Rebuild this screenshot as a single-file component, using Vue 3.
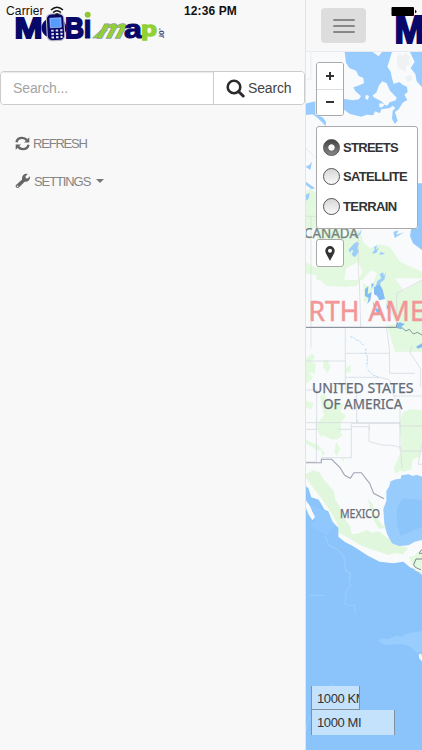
<script setup>
import { ref } from 'vue'

const query = ref('')
const layer = ref('STREETS')
const layers = ['STREETS', 'SATELLITE', 'TERRAIN']
const bars = [0, 1, 2]
</script>

<template>
  <div class="screen">
    <aside class="drawer">
      <a class="brand">
        <svg width="180" height="50" viewBox="0 0 180 50">
          <g class="heavy" fill="#08086a" stroke="#08086a">
            <ellipse cx="54" cy="28" rx="12.500" ry="10.500" stroke="none" />
            <text x="14.500" y="38" font-size="30" textLength="28" lengthAdjust="spacingAndGlyphs" stroke-width="1.8">M</text>
            <text x="65" y="38" font-size="30" textLength="19" lengthAdjust="spacingAndGlyphs" stroke-width="1.8">B</text>
            <text x="83" y="38" font-size="33" textLength="9" lengthAdjust="spacingAndGlyphs" stroke-width=".8">ı</text>
          </g>
          <circle cx="87.7" cy="14.7" r="3" fill="#8cc832" />
          <g transform="rotate(-3 56 27)">
            <rect x="46.8" y="13.8" width="17.5" height="26.8" rx="5" fill="#08086a" stroke="#b9b9c6" stroke-width="1.1" />
            <rect x="50.3" y="18" width="11" height="9.5" fill="#579bff" stroke="#cbdcf8" stroke-width=".6" />
            <path d="M51 30.5h2.5m2 0H58m2 0h2.3M51 34h2.5m2 0H58m2 0h2.3M51 37.3h2.5m2 0H58m2 0h2" stroke="#e5e5ec" stroke-width="2" />
          </g>
          <g class="heavy">
            <path d="M92.500 38L101 30H107.500L99.500 38Z" fill="#92d132" stroke="#8c98a2" stroke-width=".7" />
            <text class="outlined" transform="translate(95.500 37.500) skewX(-28)" font-size="26" textLength="26" lengthAdjust="spacingAndGlyphs" fill="#92d132" stroke="#8c98a2" stroke-width="1.400">m</text>
            <text x="124" y="37.500" font-size="26" textLength="18" lengthAdjust="spacingAndGlyphs" fill="#08086a" stroke="#08086a" stroke-width="1">a</text>
            <text x="141" y="35.500" font-size="21" textLength="16" lengthAdjust="spacingAndGlyphs" fill="#92d132" stroke="#92d132" stroke-width="1.4">p</text>
          </g>
          <text class="suffix" transform="translate(159 28) rotate(90)" font-size="9" textLength="10" lengthAdjust="spacingAndGlyphs" fill="#4b4b75">.or</text>
        </svg>
      </a>

      <form class="search" @submit.prevent>
        <input v-model="query" type="text" placeholder="Search..." />
        <button type="submit">
          <svg width="19" height="19" viewBox="0 0 19 19" fill="none" stroke="#2b2b2b">
            <circle cx="8" cy="8" r="6.3" stroke-width="2.6" />
            <path d="M12.5 12.5l4.7 4.5" stroke-width="3" stroke-linecap="round" />
          </svg>
          <span>Search</span>
        </button>
      </form>

      <nav class="links">
        <a>
          <svg width="15" height="15" viewBox="0 0 15 15">
            <g fill="none" stroke="#666" stroke-width="2.4">
              <path d="M1.5 6.3C2 3.3 4.5 1.9 7.2 1.9c2 0 3.500.8 4.700 2.200" />
              <path d="M13.500 8.700c-.5 3-3 4.400-5.700 4.400-2 0-3.500-.8-4.700-2.200" />
            </g>
            <path d="M14.300 1.200v5.200H9.100zM.7 13.800V8.600h5.200z" fill="#666" />
          </svg>
          <span class="refresh">REFRESH</span>
        </a>
        <a>
          <svg width="16" height="16" viewBox="0 0 16 16">
            <path d="M1 12 L7.100 6.600 C6.400 3.500 8.500.8 11.800.8 L12.800 1 L10.500 3.300 L10.800 5.200 L12.600 5.500 L15 3.200 C15.600 6.500 13 9.200 9.700 8.700 L3.900 14.600 C2.300 16.100-.5 13.600 1 12Z" fill="#666" />
            <circle cx="2.600" cy="13.200" r=".8" fill="#f8f8f8" />
          </svg>
          <span class="settings">SETTINGS</span>
          <i class="caret"></i>
        </a>
      </nav>
    </aside>

    <main class="content">
      <header class="topbar">
        <button class="toggle" aria-label="Menu"><i v-for="b in bars" :key="b"></i></button>
        <svg width="27" height="52" viewBox="395 0 27 52">
          <text class="heavy" x="394.500" y="43" font-size="38" textLength="30" lengthAdjust="spacingAndGlyphs" fill="#08086a" stroke="#08086a" stroke-width="2">M</text>
        </svg>
      </header>

      <section class="map">
        <svg class="tiles" width="117" height="698" viewBox="305 52 117 698">
          <rect x="305" y="52" width="117" height="698" fill="#f8fafc" />

          <g transform="translate(300 50) scale(.33333)">
            <path d="M15 87H33V6" fill="none" stroke="#e5e8eb" stroke-width="2" />
            <path d="M134 6H276L270 25 262 50 272 65 276 85 281 102 298 96 308 104 321 110 323 126 313 134 322 150 308 158 296 178 285 186 293 212 284 222 276 206 278 182 286 174 278 167 270 174 244 178 240 190 225 184 220 196 200 194 184 200 150 192 130 178V146L158 151 177 148 183 138 166 124 160 112 172 108 192 100 190 84 176 78 168 62 148 54 138 38ZM330 6H366V112L350 94 346 72 332 54 344 36Z" fill="#98ccfe" />
            <path d="M247 94L260 100 270 122 290 143 287 151 269 157 261 168 250 160 244 154 221 142 218 136 229 128 237 106ZM198 134l9 4-3 12-9-5ZM218 6h28l-10 13ZM240 159l15 4-10 10-9-4Z" fill="#f8fafc" />
            <path d="M290 25l8-15 10 10 6-12 16 12-5 10 6 15-12 3-4 18-12-10-10-2Zm25 55l18-5 5 13-15 8Z" fill="#eef2f3" />
            <path d="M15 161L46 154V194L68 202 78 215 77 228 66 217 54 205 38 193 15 195Z" fill="#98ccfe" />
            <path d="M15 292l30 30" fill="none" stroke="#dfe3e6" stroke-width="2" />
            <path d="M16 350l12-5 8-10-5 25Z" fill="#98ccfe" />
          </g>

          <g transform="translate(300 165) scale(.33333)">
            <path d="M15 85L30 70 48 85V190H130V225L150 190 182 200 190 232 210 250 238 238 270 246 300 290 366 320V560H285L260 480 215 410H60L48 330 15 325Z" fill="#e2f8df" />
            <path d="M15 190H50V310L15 290ZM200 190H330L322 222 290 220 270 235 225 222ZM138 310l35-18 15 28-20 35-35-9ZM183 350l30-35 18 10-18 45ZM285 340h81v40l-50 5Z" fill="#f8fafc" />
            <path d="M334 190L330 213 339 235 366 255V55H354V190Z" fill="#92c8fc" />
            <g fill="#9dcef9">
              <path d="M160 238l10-8 8 5-6 14 6 10-13 18-10-8 5-13-14-2ZM145 252l10 5-5 6ZM187 190l-6 18-11 12-8-6 16-9ZM222 246l10-5-5 13 10-7-8 17-13 2 8-13ZM242 260l14 6-18 4ZM232 348l12-8-5-12 10-6 3 10 6-10-5 22-10 8-8 20-8-8Z" />
              <path d="M15 48l30 22-10 3-20-15ZM15 90l15-6-5 18-10 8ZM280 200l16-4-8 13 24-7-28 17Z" />
            </g>
            <path d="M15 154h34M33 154V550M175 200V310L183 485" fill="none" stroke="#d6ddd8" stroke-width="2" />
          </g>

          <g transform="translate(300 280) scale(.33333)">
            <path d="M35 0H190L195 142H17V10ZM204 50l22-26 20 8 15 40 28 60-70 8-20-45Z" fill="#f8fafc" />
            <path d="M62 0h118l-8 17-38 4-56-4Z" fill="#e2f8df" />
            <path d="M195 28l10-10-2 25 12-7-4 25-9 11 4-18-11-6ZM214 10l8 2-7 14ZM222 22l17-10 9 17 7 28-17 4-7-14-9-4ZM218 64l13 22 11-2-5 20-13-14ZM260 70l5 12-5 8Z" fill="#84bcf6" />
            <path d="M17 235l20-14 8 10-10 12 12 10-2 27-18-3 12 16-22 20ZM70 244l12-6 10 24-10 16-12-15ZM137 265l15-10v20l-15 4ZM17 362l25 8-8 18-17-6ZM60 350l14-10 5 20 12-5-3 18 18-10 25 10-10 22 17 12-16 22 2 25-26 25-34-15 10-30-18-8 16-20ZM310 396l20-8 36 3v80h-66v-48ZM338 142l28-10v38Z" fill="#e2f8df" />
            <path d="M300 40l66-40v160l-30-12-45-6Z" fill="#e2f8df" />
            <g fill="none" stroke="#d5d9de" stroke-width="2.200">
              <path d="M17 243H136M136 142V330M137 220H268M136 292H240L268 300M259 142L268 205 269 280H345M17 330H50V450M182 142L178 0M33 0V142M290 135V40L366 0M335 200l-5 18 12 18 20 30v55M270 300l12 50 18 18V450M170 320V428M283 348h83M155 430H300M0 448h155M208 432v18" />
            </g>
            <path d="M17 142H289L293 128" fill="none" stroke="#737d8b" stroke-width="3" />
            <path d="M290 142l17 2 11 9 10-5 12 14 12-5 14 8" fill="none" stroke="#74838d" stroke-width="2.500" />
            <path d="M290 132l10-5 14 5-12 10 3 6-13-3ZM348 200l18-10v12l-12 4Z" fill="#83bbf3" />
            <path d="M150 171l10 1 8 8 9 2 14 14M198 205l-2 12 7 14-3 30M203 270l17 15 16 7" fill="none" stroke="#b8daf8" stroke-width="3" stroke-dasharray="8 3" />
          </g>

          <g transform="translate(300 420) scale(.33333)">
            <path d="M302 0h64V55l-8 55-20 10-4 28-22 8-12-4-14 8-5-15 15-35 8-18ZM51 10l20-12 15 10 13-12 16 16-2 22 15 10-17 15-15-4-6-14-16-4-11 15-8-15ZM17 57l18 11 20 7 14 17-18-3-34-18ZM108 65l12 20-8 23-9-10ZM63 88l12 12-8 10ZM125 110l9 6-6 10Z" fill="#e2f8df" />
            <path d="M23 160l16-9 19 6 12 20 16 19 16 18 4 25 13 20 15 38 17 22 4 24 25-4 22-10 13 10 20-5 28 20 18-12-19-18-25 2-21-35-6-27-6-28 14 17 8 33 21 30 24 15 8 36 18 4 27 15-15 17-25-4-18 6-34-11-47-16-44-27-36-18 8-18-20-38-30-43-32-42-19-27Z" fill="#e1f7dd" />
            <g fill="none" stroke="#d5d9de" stroke-width="2.200">
              <path d="M17 8H300V92M49 0V125M17 125L49 126M154 8V113H64M155 20H207V65L228 70 250 76 272 75 302 82 306 145M173 8V0M302 93h64M366 18h-64M366 68l-4 25-8 40h12" />
            </g>
            <path d="M17 128H64V118H95L120 143 134 166 151 175 162 158H184L209 190 221 220 252 236" fill="none" stroke="#a0a4b2" stroke-width="3.200" />
            <path d="M15 196L25 205 34 232 56 239 74 269 85 274 96 304 115 324V350L135 366 162 380 205 408 239 425 280 430 310 425 330 442 366 458V1000H15Z" fill="#8ac4fb" />
            <path d="M17 240l13 18 8 19 9 14-10 9-10-14-10-24Z" fill="#f8fafc" />
            <path d="M85 277l20 40-24 29-49-28 14-18-12-40 20 4Z" fill="#94cafd" opacity=".6" />
            <path d="M366 170L350 164 338 168 326 163 304 166 302 176 288 178 272 184 267 200 259 213V242L250 268 253 311 261 341 276 370 297 378 325 376 345 365 366 360Z" fill="#98ccfd" />
            <path d="M366 240L307 235 290 267 292 315 302 348 366 320Z" fill="#8cc5fa" />
            <path d="M326 410l18-3 8-11 14-2v54l-30-12Z" fill="#e2f8df" />
            <path d="M357 400h9m0-12-8 10M366 417h-18l-7 17 5 8 18 8" fill="none" stroke="#798486" stroke-width="3" />
            <path d="M75 347l12 30 24 10 20 20 6 44 15 12-4 17" fill="none" stroke="#97ccfd" stroke-width="4" />
          </g>

          <g transform="translate(300 570) scale(.33333)">
            <path d="M342 0l15 7 9 8V0Z" fill="#eaf8e3" />
            <path d="M135 0l15 8-2 28 4 14-13 10-4 43 13 5 14-4 5 26M28 76h48M90 350l10-8 5 8M18 485l4-28 12-20" fill="none" stroke="#9acdfc" stroke-width="3" />
            <path d="M236 210l14-6 10 4 30-11 14 3 14-9 30-5 18-3v60l-12 8-25-22-24-7-48 3-18-8Z" fill="#98cdfe" />
            <path d="M356 254l7-4 3 8v17l-8-10Z" fill="#eefaff" />
          </g>

          <g class="labels" fill="#666b78" stroke="#666b78" stroke-width=".25">
            <text x="304" y="238" font-size="14" textLength="54" lengthAdjust="spacingAndGlyphs" fill="#78887f">CANADA</text>
            <g fill="#f39697" stroke="#f39697" stroke-width=".5" font-size="27">
              <text x="308.500" y="321" textLength="51" lengthAdjust="spacingAndGlyphs">RTH</text>
              <text x="368.500" y="321" textLength="82" lengthAdjust="spacingAndGlyphs">AMERI</text>
            </g>
            <text x="312" y="393" font-size="14" textLength="101.500" lengthAdjust="spacingAndGlyphs">UNITED STATES</text>
            <text x="323" y="408.500" font-size="14" textLength="79.500" lengthAdjust="spacingAndGlyphs">OF AMERICA</text>
            <text x="340" y="518" font-size="12" textLength="40" lengthAdjust="spacingAndGlyphs">MEXICO</text>
          </g>
        </svg>

        <div class="controls">
          <div class="zoom">
            <button aria-label="Zoom in"><svg width="10" height="10"><path d="M5 1v8M1 5h8" stroke="#333" stroke-width="2" /></svg></button>
            <button aria-label="Zoom out"><svg width="10" height="10"><path d="M1 5h8" stroke="#333" stroke-width="2.200" /></svg></button>
          </div>
          <div class="layers">
            <label v-for="name in layers" :key="name">
              <input v-model="layer" type="radio" :value="name" />
              <span :class="name.toLowerCase()">{{ name }}</span>
            </label>
          </div>
          <button class="locate" aria-label="Locate">
            <svg width="10" height="15" viewBox="0 0 10 15"><path fill-rule="evenodd" d="M5 0a4.700 4.700 0 0 1 4.700 4.700C9.700 7.500 7 10.500 5 15 3 10.500.3 7.500.3 4.700A4.700 4.700 0 0 1 5 0Zm0 2.700a2 2 0 1 0 0 4 2 2 0 0 0 0-4Z" fill="#333" /></svg>
          </button>
        </div>

        <div class="scale">
          <div class="km">1000 KM</div>
          <div class="mi">1000 MI</div>
        </div>
      </section>
    </main>

    <div class="status">
      <span class="carrier">Carrier</span>
      <svg class="wifi" width="14" height="11" viewBox="0 0 14 11" fill="none" stroke="#111" stroke-width="1.500">
        <path d="M1 4Q7-1.600 13 4M3.100 6.500Q7 2.900 10.900 6.500" />
        <path d="M7 10.300L4.900 8.200Q7 6.400 9.100 8.200Z" fill="#111" stroke="none" />
      </svg>
      <span class="time">12:36 PM</span>
      <svg class="battery" width="26" height="11" viewBox="0 0 26 11"><rect x=".5" y="1" width="22.500" height="9" rx="1" /><path d="M24 4q1.500 0 1.500 1.500T24 7Z" /></svg>
    </div>
  </div>
</template>

<style>
body {
  margin: 0;
  overflow: hidden;
}
</style>

<style scoped>
* {
  box-sizing: border-box;
}
.screen {
  position: relative;
  display: grid;
  grid-template-columns: 305px 117px;
  width: 422px;
  height: 750px;
  overflow: hidden;
  background: #f8f8f8;
  font-family: "Liberation Sans", Arial, sans-serif;
}
button {
  padding: 0;
  border: 0;
  background: #fff;
  font-family: inherit;
}
svg {
  display: block;
  flex: none;
}
.heavy,
.suffix {
  font-family: "Liberation Sans", Arial, sans-serif;
  font-weight: 700;
}
.outlined {
  paint-order: stroke;
}
.labels {
  font-family: "Noto Sans", sans-serif;
}
.drawer {
  display: flex;
  flex-direction: column;
}
.brand {
  height: 71px;
}
.search {
  display: flex;
  height: 34px;
  border: 1px solid #ccc;
  border-radius: 4px;
  background: #fff;
  overflow: hidden;
}
.search input {
  width: 213px;
  padding: 0 12px;
  border: 0;
  border-right: 1px solid #ccc;
  outline: 0;
  box-shadow: inset 0 1px 1px rgba(0, 0, 0, 0.09);
  font: 14px "Liberation Sans", Arial, sans-serif;
  letter-spacing: -0.1px;
}
.search input::placeholder {
  color: #a4a4a4;
}
.search button {
  display: flex;
  flex: 1;
  align-items: center;
  gap: 3px;
  padding-left: 12px;
  color: #444;
  font-size: 14px;
  letter-spacing: -0.15px;
}
.links {
  display: flex;
  flex-direction: column;
  padding: 19px 15px;
}
.links a {
  display: flex;
  align-items: center;
  height: 38px;
  gap: 3px;
  color: #858585;
  font-size: 13px;
}
.refresh {
  letter-spacing: -1.2px;
}
.settings {
  letter-spacing: -1.1px;
}
.caret {
  margin-left: 3px;
  border: 4px solid transparent;
  border-top-color: #777;
  border-bottom: 0;
}
.content {
  display: flex;
  flex-direction: column;
  border-left: 1px solid #e1e4e8;
}
.topbar {
  display: flex;
  align-items: center;
  justify-content: space-between;
  height: 52px;
  padding-left: 15px;
  border-bottom: 1px solid #e5ebf0;
}
.toggle {
  display: flex;
  flex-direction: column;
  align-items: center;
  justify-content: center;
  gap: 4px;
  width: 45px;
  height: 35px;
  border-radius: 4px;
  background: #ddd;
}
.toggle i {
  width: 22px;
  height: 2px;
  border-radius: 1px;
  background: #888;
}
.map {
  display: grid;
  height: 698px;
}
.map > * {
  grid-area: 1 / 1;
}
.tiles {
  margin-left: -1px;
  clip-path: inset(0 0 0 1px);
}
.controls {
  z-index: 1;
  display: flex;
  flex-direction: column;
  align-items: flex-start;
  gap: 10px;
  padding: 10px 0 0 10px;
}
.zoom,
.layers,
.locate {
  border: 1px solid #aaa;
  border-radius: 3px;
  background: #fff;
}
.zoom {
  display: flex;
  flex-direction: column;
  width: 28px;
  height: 54px;
  overflow: hidden;
}
.zoom button {
  display: flex;
  flex: 1;
  align-items: center;
  justify-content: center;
}
.zoom button + button {
  border-top: 1px solid #ddd;
}
.layers {
  display: flex;
  flex-direction: column;
  gap: 13.5px;
  width: 102px;
  height: 103px;
  padding: 12px 0 0 6px;
}
.layers label {
  display: flex;
  align-items: center;
  gap: 3px;
  height: 16px;
  color: #333;
  font-size: 13px;
  font-weight: 700;
}
.layers input {
  appearance: none;
  width: 17px;
  height: 17px;
  margin: 0;
  flex: none;
  border: 1px solid #555;
  border-radius: 50%;
  background: linear-gradient(#d6d6d6, #fafafa);
}
.layers input:checked {
  background: radial-gradient(circle, #f8f8f8 0 2.8px, transparent 3.5px), linear-gradient(#444, #858585);
}
.streets {
  letter-spacing: -0.7px;
}
.satellite {
  letter-spacing: -0.65px;
}
.terrain {
  letter-spacing: -0.6px;
}
.locate {
  display: flex;
  align-items: center;
  justify-content: center;
  width: 28px;
  height: 28px;
}
.scale {
  z-index: 1;
  align-self: end;
  padding: 0 0 15px 5px;
  color: #333;
  font-size: 13px;
  letter-spacing: -0.4px;
}
.scale div {
  height: 24px;
  padding-left: 5px;
  border: solid #84909b;
  border-width: 0 1px 1px;
  background: rgba(255, 255, 255, 0.5);
  line-height: 25px;
  white-space: nowrap;
  overflow: hidden;
}
.scale .km {
  width: 49px;
}
.scale .mi {
  width: 84px;
  height: 25px;
  border-bottom: 0;
}
.status {
  position: absolute;
  z-index: 2;
  inset: 0 0 auto;
  display: flex;
  align-items: center;
  height: 22px;
  padding: 0 5px 0 6px;
  color: #111;
  font-size: 12px;
}
.carrier {
  width: 38px;
  letter-spacing: 0.15px;
}
.wifi {
  margin-left: 6px;
}
.time {
  margin-left: 120px;
  font-weight: 700;
  letter-spacing: 0.1px;
}
.battery {
  margin-left: auto;
}
</style>
